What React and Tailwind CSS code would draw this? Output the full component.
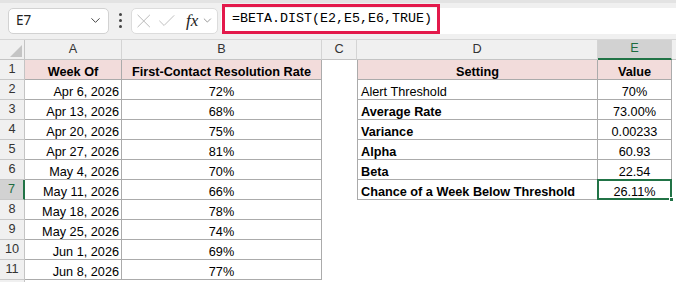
import { ChevronDown, X, Check } from "lucide-react";

const weeks = [
  ["Apr 6, 2026", "72%"],
  ["Apr 13, 2026", "68%"],
  ["Apr 20, 2026", "75%"],
  ["Apr 27, 2026", "81%"],
  ["May 4, 2026", "70%"],
  ["May 11, 2026", "66%"],
  ["May 18, 2026", "78%"],
  ["May 25, 2026", "74%"],
  ["Jun 1, 2026", "69%"],
  ["Jun 8, 2026", "77%"],
];

const settings = [
  ["Alert Threshold", "70%", false],
  ["Average Rate", "73.00%", true],
  ["Variance", "0.00233", true],
  ["Alpha", "60.93", true],
  ["Beta", "22.54", true],
  ["Chance of a Week Below Threshold", "26.11%", true],
];

const font = { fontFamily: '"Liberation Sans", Arial, sans-serif' };

function ColHead({ label, selected }) {
  return (
    <div
      className={
        "h-[20px] flex items-center justify-center border-r border-[#d4d4d4] text-[12.7px] " +
        (selected
          ? "bg-[#d2d2d2] text-[#1d6b40] border-b-2 border-b-[#217346]"
          : "bg-[#f0f0f0] text-[#333] border-b border-b-[#c4c4c4]")
      }
    >
      {label}
    </div>
  );
}

function RowHead({ n, selected }) {
  return (
    <div
      className={
        "h-[20px] flex items-center justify-center border-b border-[#c8c8c8] text-[12.7px] " +
        (selected
          ? "bg-[#d2d2d2] text-[#1d6b40] border-r-2 border-r-[#217346]"
          : "bg-[#f0f0f0] text-[#333] border-r border-r-[#c4c4c4]")
      }
    >
      {n}
    </div>
  );
}

export default function App() {
  const rows = [];
  for (let r = 1; r <= 11; r++) {
    const isHead = r === 1;
    const w = weeks[r - 2];
    const s = settings[r - 2];
    const cellBase = "h-[20px] flex items-end leading-[normal] text-[12.7px] text-black";
    rows.push(
      <RowHead key={"h" + r} n={r} selected={r === 7} />,
      <div
        key={"a" + r}
        className={
          cellBase +
          " border-r border-b border-[#ababab] " +
          (isHead ? "bg-[#f2dcdb] justify-center font-bold" : "justify-end pr-[2px]")
        }
      >
        {isHead ? "Week Of" : w[0]}
      </div>,
      <div
        key={"b" + r}
        className={
          cellBase +
          " justify-center border-r border-b border-[#ababab] " +
          (isHead ? "bg-[#f2dcdb] font-bold" : "")
        }
      >
        {isHead ? "First-Contact Resolution Rate" : w[1]}
      </div>,
      <div key={"c" + r} className="h-[20px]" />,
      r <= 7 ? (
        <div
          key={"d" + r}
          className={
            cellBase +
            " border-l border-r border-b border-[#ababab] " +
            (isHead
              ? "bg-[#f2dcdb] justify-center font-bold"
              : "pl-[3px] " + (s[2] ? "font-bold" : ""))
          }
        >
          {isHead ? "Setting" : s[0]}
        </div>
      ) : (
        <div key={"d" + r} className="h-[20px]" />
      ),
      r <= 7 ? (
        <div
          key={"e" + r}
          className={
            cellBase +
            " relative justify-center border-r border-b border-[#ababab] " +
            (isHead ? "bg-[#f2dcdb] font-bold" : "")
          }
        >
          {isHead ? "Value" : s[1]}
          {r === 7 && (
            <>
              <div className="absolute left-[-1px] top-[-1px] right-[-1px] bottom-[-1px] border-2 border-[#217346]" />
              <div className="absolute right-[-3px] bottom-[-3px] w-[5px] h-[5px] bg-[#217346] border border-white" />
            </>
          )}
        </div>
      ) : (
        <div key={"e" + r} className="h-[20px]" />
      ),
      <div key={"f" + r} className="h-[20px]" />
    );
  }

  return (
    <div className="w-[676px] h-[282px] overflow-hidden bg-white" style={font}>
      {/* formula bar */}
      <div className="h-[40px] bg-[#f0f0f0] relative border-b border-[#d6d6d6]">
        <div className="h-[3px] bg-[#e3e3e3]" />
        <div className="flex items-center h-[37px] pb-[2px]">
          <div className="ml-[8px] w-[101px] h-[26px] bg-white border border-[#d2d2d2] rounded-[5px] flex items-center justify-between pl-[7px] pr-[5px]">
            <span className="text-[13.5px] text-[#222]" style={{ fontFamily: '"Noto Sans", sans-serif' }}>E7</span>
            <ChevronDown size={15} strokeWidth={1.6} className="text-[#444]" />
          </div>
          <div className="w-[22px] flex flex-col items-center gap-[3px]">
            <span className="w-[3px] h-[3px] rounded-full bg-[#444]" />
            <span className="w-[3px] h-[3px] rounded-full bg-[#444]" />
            <span className="w-[3px] h-[3px] rounded-full bg-[#444]" />
          </div>
          <div className="w-[87px] h-[26px] bg-white border border-[#dcdcdc] rounded-[5px] flex items-center pl-[0px] pr-[3px] gap-[0px]">
            <X size={24} strokeWidth={1} className="text-[#b8b8b8]" />
            <Check size={22} strokeWidth={1} className="text-[#b8b8b8] ml-[1px]" />
            <span
              className="ml-[8px] italic text-[17px] text-[#222] leading-none"
              style={{ fontFamily: '"Liberation Serif", serif' }}
            >
              fx
            </span>
            <ChevronDown size={13} strokeWidth={1.4} className="text-[#777] ml-[3px]" />
          </div>
          <div className="ml-[3px] flex-1 h-[26px] bg-white rounded-l-[5px] relative">
            <div className="absolute left-[1px] top-[-4px] w-[218px] h-[30px] border-[3px] border-[#e3194b] flex items-center pl-[7px]">
              <span
                className="text-[13.33px] text-black"
                style={{ fontFamily: '"Liberation Mono", monospace' }}
              >
                =BETA.DIST(E2,E5,E6,TRUE)
              </span>
            </div>
          </div>
        </div>
      </div>

      {/* sheet */}
      <div className="grid grid-cols-[25px_97px_200px_35px_241px_74px_1fr]">
        <div className="h-[20px] bg-[#f0f0f0] border-r border-b border-[#c4c4c4] relative">
          <div className="absolute right-[2px] bottom-[2px] w-0 h-0 border-l-[12px] border-l-transparent border-b-[12px] border-b-[#c4c4c4]" />
        </div>
        <ColHead label="A" />
        <ColHead label="B" />
        <ColHead label="C" />
        <ColHead label="D" />
        <ColHead label="E" selected />
        <div className="h-[20px] bg-[#f0f0f0] border-b border-[#c4c4c4]" />
        {rows}
        <div className="h-[20px] bg-[#f0f0f0] border-r border-[#c4c4c4]" />
      </div>
    </div>
  );
}
